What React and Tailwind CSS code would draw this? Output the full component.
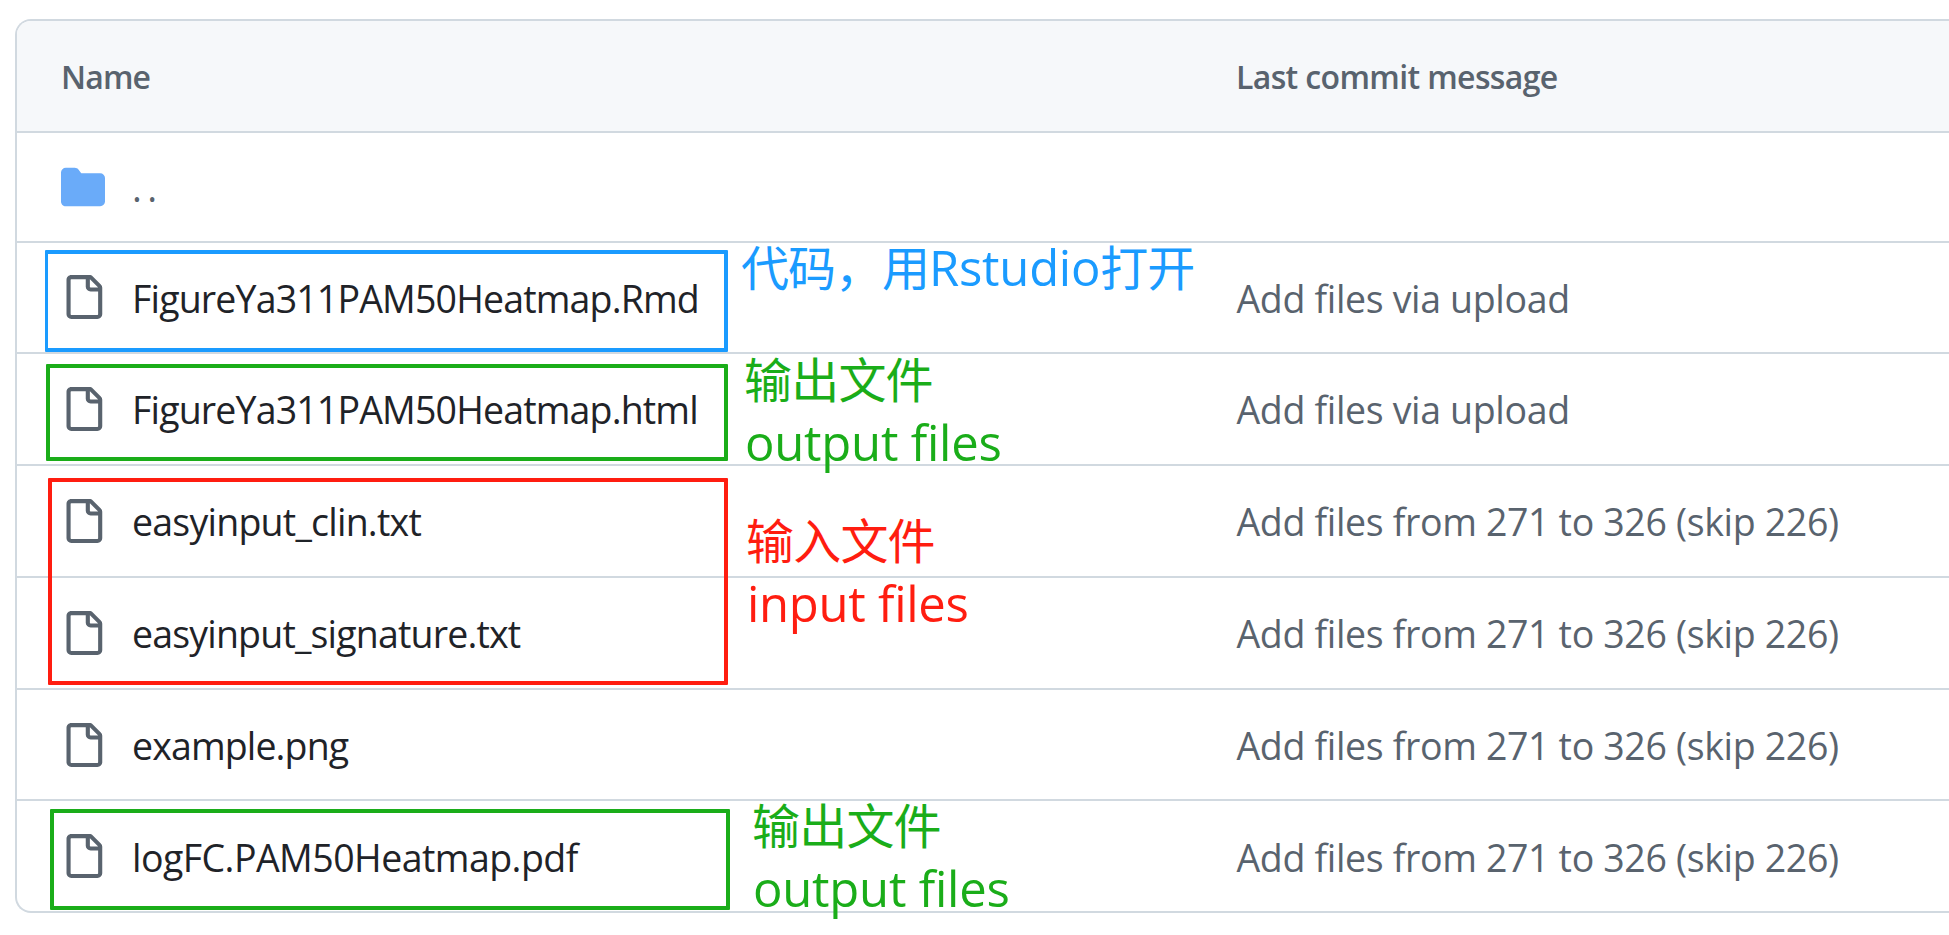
const UPLOAD = { text: "Add files via upload", tracking: "tracking-[-0.34px]" };
const BULK = { text: "Add files from 271 to 326 (skip 226)", tracking: "tracking-[-0.34px]" };

const FILES = [
  { name: "FigureYa311PAM50Heatmap.Rmd", tracking: "tracking-[-0.84px]", height: "h-[111px]", pad: "pt-8", textPad: "-mt-[2px]", commit: UPLOAD },
  { name: "FigureYa311PAM50Heatmap.html", tracking: "tracking-[-0.84px]", height: "h-[112px]", pad: "pt-[33px]", textPad: "-mt-[3px]", commit: UPLOAD },
  { name: "easyinput_clin.txt", tracking: "tracking-[-0.77px]", height: "h-[112px]", pad: "pt-[33px]", textPad: "-mt-[3px]", commit: BULK },
  { name: "easyinput_signature.txt", tracking: "tracking-[-0.82px]", height: "h-[112px]", pad: "pt-[33px]", textPad: "-mt-[3px]", commit: BULK },
  { name: "example.png", tracking: "tracking-[-0.87px]", height: "h-[111px]", pad: "pt-[33px]", textPad: "-mt-[3px]", commit: BULK },
  { name: "logFC.PAM50Heatmap.pdf", tracking: "tracking-[-0.55px]", height: "h-[110px]", pad: "pt-[33px]", textPad: "-mt-[2px]", commit: BULK, last: true },
];

function FolderIcon() {
  return (
    <svg viewBox="0 0 16 16" className="size-11 shrink-0 fill-[#6aabf9]" aria-hidden="true">
      <path d="M1.75 1A1.75 1.75 0 0 0 0 2.75v10.5C0 14.216.784 15 1.75 15h12.5A1.75 1.75 0 0 0 16 13.25v-8.5A1.75 1.75 0 0 0 14.25 3H7.5a.25.25 0 0 1-.2-.1l-.9-1.2C6.07 1.26 5.55 1 5 1H1.75Z" />
    </svg>
  );
}

function FileIcon() {
  return (
    <svg viewBox="0 0 16 16" className="size-11 shrink-0 fill-[#59636e]" aria-hidden="true">
      <path d="M2 1.75C2 .784 2.784 0 3.75 0h6.586c.464 0 .909.184 1.237.513l2.914 2.914c.329.328.513.773.513 1.237v9.586A1.75 1.75 0 0 1 13.25 16h-9.5A1.75 1.75 0 0 1 2 14.25Zm1.75-.25a.25.25 0 0 0-.25.25v12.5c0 .138.112.25.25.25h9.5a.25.25 0 0 0 .25-.25V6h-2.75A1.75 1.75 0 0 1 9 4.25V1.5Zm6.75.062V4.25c0 .138.112.25.25.25h2.688l-.011-.013-2.914-2.914-.013-.011Z" />
    </svg>
  );
}

function FileRow({ file }) {
  return (
    <div className={`flex items-start pl-11 ${file.height} ${file.pad} ${file.last ? "" : "border-b-2 border-[#d1d9e0]"}`}>
      <div className="flex w-[1175.5px] shrink-0 items-start gap-[27px]">
        <FileIcon />
        <span className={`whitespace-nowrap text-[#1f2328] ${file.textPad} ${file.tracking}`}>{file.name}</span>
      </div>
      <span className={`whitespace-nowrap text-[#59636e] ${file.textPad} ${file.commit.tracking}`}>{file.commit.text}</span>
    </div>
  );
}

function Note({ position, color, zh, en, tracking }) {
  return (
    <div className={`absolute whitespace-nowrap leading-[62px] ${position} ${color}`}>
      <div className="-ml-px text-[48px] tracking-[-0.8px]">{zh}</div>
      <div className={`text-[49px] ${tracking}`}>{en}</div>
    </div>
  );
}

export default function App() {
  return (
    <div className="relative h-[935px] w-full overflow-hidden bg-white pt-[19px] pl-[15px] font-['Open_Sans','Noto_Sans_CJK_SC',sans-serif]">
      <div className="h-[894px] overflow-hidden rounded-l-2xl border-2 border-r-0 border-[#d1d9e0] text-[37.5px] leading-[51px]">
        <div className="flex h-28 items-start border-b-2 border-[#d1d9e0] bg-[#f6f8fa] pt-[34px] pl-11 text-[32px] leading-[43px] font-semibold text-[#59636e]">
          <span className="w-[1175px] shrink-0 tracking-[-0.85px]">Name</span>
          <span className="whitespace-nowrap tracking-[-0.64px]">Last commit message</span>
        </div>
        <div className="flex h-[110px] items-start gap-[27px] border-b-2 border-[#d1d9e0] pt-8 pl-11">
          <FolderIcon />
          <span className="-mt-[3px] tracking-[5.5px] text-[#59636e]">..</span>
        </div>
        {FILES.map((file) => (
          <FileRow key={file.name} file={file} />
        ))}
      </div>

      <div className="absolute top-[250px] left-[45px] h-[102px] w-[683px] rounded-[1px] border-4 border-l-3 border-[#1a9bff]" />
      <div className="absolute top-[364px] left-[46px] h-[97px] w-[682px] rounded-[1px] border-4 border-[#1aad19]" />
      <div className="absolute top-[478px] left-[48px] h-[207px] w-[680px] rounded-[1px] border-4 border-[#ff1d10]" />
      <div className="absolute top-[809px] left-[50px] h-[101px] w-[680px] rounded-[1px] border-4 border-[#1aad19]" />

      <div className="absolute top-[237px] left-[741px] text-[48px] leading-[61px] tracking-[-1px] whitespace-nowrap text-[#1a9bff]">
        <span>代码，用</span>
        <span className="text-[49px] tracking-[-0.25px]">Rstudio</span>
        <span>打开</span>
      </div>
      <Note position="top-[349px] left-[745px]" color="text-[#1aad19]" zh="输出文件" en="output files" tracking="tracking-[-0.22px]" />
      <Note position="top-[510px] left-[747px]" color="text-[#ff1d10]" zh="输入文件" en="input files" tracking="tracking-[-0.28px]" />
      <Note position="top-[795px] left-[753px]" color="text-[#1aad19]" zh="输出文件" en="output files" tracking="tracking-[-0.22px]" />
    </div>
  );
}
